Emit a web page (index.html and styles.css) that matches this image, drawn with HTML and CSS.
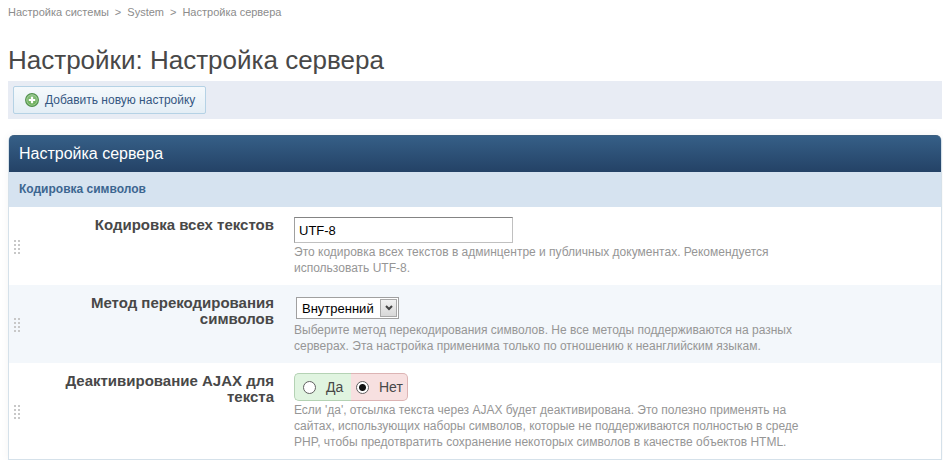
FILE: index.html
```
<!DOCTYPE html>
<html lang="ru">
<head>
    <meta charset="UTF-8">
    <meta name="viewport" content="width=device-width, initial-scale=1.0">
    <title>Настройки: Настройка сервера</title>
    <link rel="stylesheet" href="styles.css">
</head>
<body>
    <nav class="breadcrumb">
        <a href="#">Настройка системы</a>
        <span>&gt;</span>
        <a href="#">System</a>
        <span>&gt;</span>
        <a href="#">Настройка сервера</a>
    </nav>

    <h1>Настройки: Настройка сервера</h1>

    <div class="toolbar">
        <button type="button" class="btn-add">
            <svg width="14" height="14" viewBox="0 0 14 14" aria-hidden="true">
                <defs>
                    <linearGradient id="green" x1="0" y1="0" x2="0" y2="1">
                        <stop offset="0" stop-color="#8cc084"/>
                        <stop offset="1" stop-color="#66ad52"/>
                    </linearGradient>
                </defs>
                <circle cx="7" cy="7" r="6.4" fill="url(#green)" stroke="#549150" stroke-width="1.1"/>
                <circle cx="7" cy="7" r="5.2" fill="none" stroke="#a5d09c" stroke-width="0.8"/>
                <path d="M7 3.8v6.4M3.8 7h6.4" stroke="#fff" stroke-width="2.2"/>
            </svg>
            Добавить новую настройку
        </button>
    </div>

    <form class="panel">
        <h2>Настройка сервера</h2>
        <h3>Кодировка символов</h3>

        <div class="row">
            <div class="handle"></div>
            <label class="name" for="charset">Кодировка всех текстов</label>
            <div class="field">
                <input type="text" class="text-input" id="charset" value="UTF-8">
                <p class="hint">Это кодировка всех текстов в админцентре и публичных документах. Рекомендуется использовать UTF-8.</p>
            </div>
        </div>

        <div class="row alt">
            <div class="handle"></div>
            <label class="name" for="method">Метод перекодирования символов</label>
            <div class="field">
                <div class="select-box">
                    <select id="method">
                        <option>Внутренний</option>
                    </select>
                    <span class="arrow">
                        <svg width="8" height="6" viewBox="0 0 8 6" aria-hidden="true">
                            <path d="M1 1l3 3 3-3" fill="none" stroke="#444" stroke-width="2"/>
                        </svg>
                    </span>
                </div>
                <p class="hint">Выберите метод перекодирования символов. Не все методы поддерживаются на разных серверах. Эта настройка применима только по отношению к неанглийским языкам.</p>
            </div>
        </div>

        <div class="row">
            <div class="handle"></div>
            <div class="name" id="ajax-label">Деактивирование AJAX для текста</div>
            <div class="field">
                <div class="yesno" role="radiogroup" aria-labelledby="ajax-label">
                    <label class="yes"><input type="radio" name="ajax"> Да</label>
                    <label class="no"><input type="radio" name="ajax" checked> Нет</label>
                </div>
                <p class="hint">Если 'да', отсылка текста через AJAX будет деактивирована. Это полезно применять на сайтах, использующих наборы символов, которые не поддерживаются полностью в среде PHP, чтобы предотвратить сохранение некоторых символов в качестве объектов HTML.</p>
            </div>
        </div>
    </form>
</body>
</html>
```

FILE: styles.css
```
* {
    margin: 0;
    padding: 0;
    box-sizing: border-box;
}

body {
    padding: 4px 1px 0 8px;
    background: #fff;
    color: #484848;
    font-family: "Liberation Sans", Arial, sans-serif;
    font-size: 12px;
    line-height: 16px;
}

.breadcrumb {
    display: flex;
    gap: 6px;
    font-size: 11px;
    color: #8c8c8c;
}

.breadcrumb a {
    color: #8c8c8c;
    text-decoration: none;
}

h1 {
    margin-top: 24px;
    font-size: 26px;
    font-weight: normal;
    line-height: 32px;
}

.toolbar {
    margin-top: 5px;
    padding: 5px;
    background: #e8ecf4;
}

.btn-add {
    display: flex;
    align-items: center;
    gap: 6px;
    height: 28px;
    padding: 0 10px 0 11px;
    border: 1px solid #b5d2e5;
    border-radius: 2px;
    background: linear-gradient(#f5f9fc, #e4eef5);
    color: #355782;
    font-family: inherit;
    font-size: 12px;
}

.panel {
    margin-top: 16px;
    border: 1px solid #d5e1ea;
    border-top: none;
    border-radius: 6px 6px 0 0;
    box-shadow: 0 0 8px rgba(0, 0, 0, 0.05);
}

h2 {
    border-top: 1px solid #3c5f80;
    border-radius: 5px 5px 0 0;
    background: linear-gradient(#365f87, #244266);
    color: #fff;
    font-size: 16px;
    font-weight: normal;
    line-height: 36px;
    padding-left: 10px;
}

h3 {
    padding-left: 10px;
    background: #d6e3f0;
    color: #3c6690;
    font-size: 12px;
    line-height: 35px;
}

.row {
    display: flex;
    padding: 10px 0 9px 5px;
}

.alt {
    background: #f3f7fb;
}

/* drag handle, 2x4 dots */
.handle {
    flex: none;
    align-self: center;
    width: 6px;
    height: 14px;
    background: conic-gradient(transparent 75%, #c8c8c8 0) 0 0 / 4px 4px;
}

.name {
    flex: none;
    width: 254px;
    padding-left: 40px;
    font-size: 15px;
    font-weight: bold;
    text-align: right;
}

.field {
    flex: 1;
    max-width: 540px;
    padding-left: 20px;
}

.text-input {
    display: block;
    width: 219px;
    height: 26px;
    padding: 0 4px;
    border: 1px solid #c0c0c0;
    border-top-color: #848484;
    border-left-color: #a0a0a0;
    background: #fff;
    color: #000;
    font-family: inherit;
    font-size: 13px;
}

.hint {
    margin-top: 1px;
    color: #969696;
}

.select-box {
    position: relative;
    width: 103px;
    height: 22px;
    margin: 2px 0 3px 2px;
}

.select-box select {
    appearance: none;
    width: 100%;
    height: 100%;
    padding-left: 5px;
    border: 1px solid #a0a0a0;
    border-radius: 0;
    background: #fff;
    color: #000;
    font-family: inherit;
    font-size: 13px;
}

.arrow {
    position: absolute;
    top: 2px;
    right: 2px;
    bottom: 2px;
    display: flex;
    align-items: center;
    justify-content: center;
    width: 17px;
    border: 1px solid #a8a8a8;
    background: linear-gradient(#f2f2f2, #d8d8d8);
    pointer-events: none;
}

.yesno {
    display: flex;
    width: 114px;
    height: 28px;
    font-size: 14px;
}

.yesno label {
    display: flex;
    align-items: center;
    gap: 10px;
    width: 50%;
    border: 1px solid;
}

.yes {
    padding-left: 8px;
    border-radius: 5px 0 0 5px;
    background: #e0f4e0;
}

.yesno .yes {
    border-color: #b4d2b4;
    border-right: none;
}

.no {
    padding-left: 5px;
    border-radius: 0 5px 5px 0;
    background: #f7e0e0;
}

.yesno .no {
    border-color: #dcb4b4;
    border-left: none;
}

.yesno input {
    flex: none;
    appearance: none;
    width: 13px;
    height: 13px;
    border: 1px solid #606060;
    border-radius: 50%;
    background: #fff;
}

.yesno input:checked {
    background: radial-gradient(circle, #111 3px, #fff 4px);
}
```
